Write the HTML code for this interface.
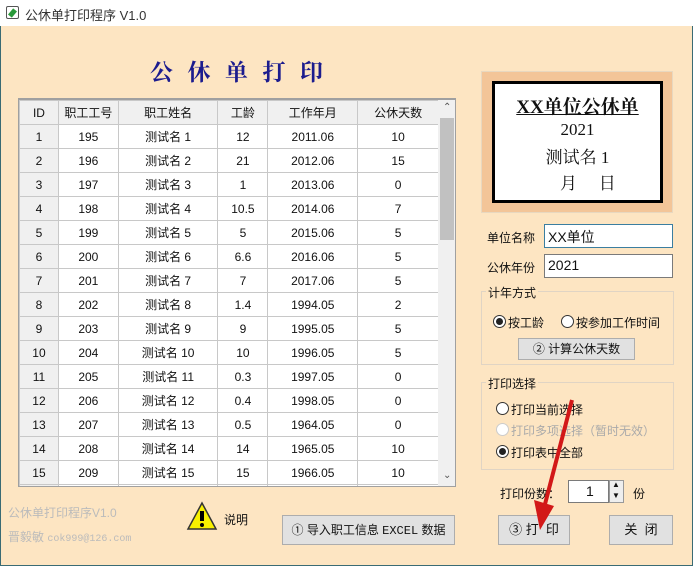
<!DOCTYPE html>
<html><head><meta charset="utf-8"><style>
*{margin:0;padding:0;box-sizing:border-box}
body{width:693px;height:566px;overflow:hidden;background:#fde5c2;font-family:"Liberation Sans","Microsoft YaHei","Noto Sans CJK SC",sans-serif;font-size:12px;color:#111;position:relative}
.a{position:absolute}
.t{position:absolute;white-space:nowrap}
.btn{position:absolute;background:#e1e1e1;border:1px solid #adadad;text-align:center;font-size:13px}
.rad{position:absolute;width:13px;height:13px;border:1px solid #333;border-radius:50%;background:#fff}
.rad.on::after{content:"";position:absolute;left:2px;top:2px;width:7px;height:7px;border-radius:50%;background:#222}
table{border-collapse:collapse;font-size:12px}
td{border:1px solid #c8c8c8;text-align:center;height:24px;padding:0}
</style></head><body>
<div class="a" style="left:0;top:0;width:693px;height:566px;border:1px solid #3a6b74;border-top:none"></div>
<div class="a" style="left:0;top:0;width:693px;height:26px;background:#fff"></div>
<div class="a" style="left:6px;top:6px;width:13px;height:13px;border:1px solid #555;border-radius:2px;background:#fff"><div class="a" style="left:3px;top:2px;width:5px;height:8px;background:#2a9a3a;transform:rotate(40deg)"></div></div>
<div class="t" style="left:25px;top:5px;font-size:13px;color:#333">公休单打印程序 V1.0</div>
<div class="t" style="left:150px;top:54px;font-size:23px;font-weight:bold;color:#1c1c8e;letter-spacing:14.5px;font-family:'Noto Serif CJK SC',serif">公休单打印</div>

<div class="a" style="left:18px;top:98px;width:438px;height:389px;border:1px solid #a0a0a0;border-top:2px solid #a0a0a0;background:#fff;overflow:hidden">
<table style="position:absolute;left:0;top:0;width:420px">
<colgroup><col style="width:39px"><col style="width:60px"><col style="width:100px"><col style="width:50px"><col style="width:90px"><col style="width:81px"></colgroup>
<tr style="background:#f0f0f0"><td>ID</td><td>职工工号</td><td>职工姓名</td><td>工龄</td><td>工作年月</td><td>公休天数</td></tr>
<tr><td style="background:#f0f0f0">1</td><td>195</td><td>测试名 1</td><td>12</td><td>2011.06</td><td>10</td></tr>
<tr><td style="background:#f0f0f0">2</td><td>196</td><td>测试名 2</td><td>21</td><td>2012.06</td><td>15</td></tr>
<tr><td style="background:#f0f0f0">3</td><td>197</td><td>测试名 3</td><td>1</td><td>2013.06</td><td>0</td></tr>
<tr><td style="background:#f0f0f0">4</td><td>198</td><td>测试名 4</td><td>10.5</td><td>2014.06</td><td>7</td></tr>
<tr><td style="background:#f0f0f0">5</td><td>199</td><td>测试名 5</td><td>5</td><td>2015.06</td><td>5</td></tr>
<tr><td style="background:#f0f0f0">6</td><td>200</td><td>测试名 6</td><td>6.6</td><td>2016.06</td><td>5</td></tr>
<tr><td style="background:#f0f0f0">7</td><td>201</td><td>测试名 7</td><td>7</td><td>2017.06</td><td>5</td></tr>
<tr><td style="background:#f0f0f0">8</td><td>202</td><td>测试名 8</td><td>1.4</td><td>1994.05</td><td>2</td></tr>
<tr><td style="background:#f0f0f0">9</td><td>203</td><td>测试名 9</td><td>9</td><td>1995.05</td><td>5</td></tr>
<tr><td style="background:#f0f0f0">10</td><td>204</td><td>测试名 10</td><td>10</td><td>1996.05</td><td>5</td></tr>
<tr><td style="background:#f0f0f0">11</td><td>205</td><td>测试名 11</td><td>0.3</td><td>1997.05</td><td>0</td></tr>
<tr><td style="background:#f0f0f0">12</td><td>206</td><td>测试名 12</td><td>0.4</td><td>1998.05</td><td>0</td></tr>
<tr><td style="background:#f0f0f0">13</td><td>207</td><td>测试名 13</td><td>0.5</td><td>1964.05</td><td>0</td></tr>
<tr><td style="background:#f0f0f0">14</td><td>208</td><td>测试名 14</td><td>14</td><td>1965.05</td><td>10</td></tr>
<tr><td style="background:#f0f0f0">15</td><td>209</td><td>测试名 15</td><td>15</td><td>1966.05</td><td>10</td></tr>
<tr><td style="background:#f0f0f0">16</td><td>210</td><td></td><td></td><td></td><td></td></tr>
</table>
<div class="a" style="left:419px;top:0;width:18px;height:387px;background:#f0f0f0"></div>
<div class="a" style="left:421px;top:18px;width:14px;height:122px;background:#c1c1c1"></div>
<div class="t" style="left:424px;top:2px;font-size:10px;color:#555">&#8963;</div>
<div class="t" style="left:424px;top:370px;font-size:10px;color:#555">&#8964;</div>
</div>

<div class="a" style="left:481px;top:71px;width:192px;height:142px;background:#f3c598;border:1px solid #e8d8c0"></div>
<div class="a" style="left:492px;top:81px;width:171px;height:122px;background:#fff;border:3px solid #000"></div>
<div class="t" style="left:492px;top:92px;width:171px;text-align:center;font-size:19px;font-weight:bold;text-decoration:underline;font-family:'Liberation Serif','Noto Serif CJK SC',serif">XX单位公休单</div>
<div class="t" style="left:492px;top:120px;width:171px;text-align:center;font-size:17px;font-family:'Liberation Serif','Noto Serif CJK SC',serif">2021</div>
<div class="t" style="left:492px;top:143px;width:171px;text-align:center;font-size:17px;font-family:'Liberation Serif','Noto Serif CJK SC',serif">测试名 1</div>
<div class="t" style="left:560px;top:169px;font-size:17px;font-family:'Noto Serif CJK SC',serif">月&nbsp;&nbsp;&nbsp;&nbsp;&nbsp;日</div>

<div class="t" style="left:487px;top:229px;font-size:12px">单位名称</div>
<div class="a" style="left:544px;top:224px;width:129px;height:24px;background:#fff;border:1px solid #3b7ea0"></div>
<div class="t" style="left:548px;top:227px;font-size:14px">XX单位</div>
<div class="t" style="left:487px;top:259px;font-size:12px">公休年份</div>
<div class="a" style="left:544px;top:254px;width:129px;height:24px;background:#fff;border:1px solid #7a7a7a"></div>
<div class="t" style="left:548px;top:257px;font-size:14px">2021</div>

<div class="a" style="left:481px;top:291px;width:193px;height:74px;border:1px solid #e0d4c4"></div>
<div class="t" style="left:486px;top:284px;font-size:12px;background:#fde5c2;padding:0 2px">计年方式</div>
<div class="rad on" style="left:493px;top:315px"></div>
<div class="t" style="left:508px;top:314px;font-size:12px">按工龄</div>
<div class="rad" style="left:561px;top:315px"></div>
<div class="t" style="left:576px;top:314px;font-size:12px">按参加工作时间</div>
<div class="btn" style="left:518px;top:338px;width:117px;height:22px;line-height:20px;font-size:12px">② 计算公休天数</div>

<div class="a" style="left:481px;top:382px;width:193px;height:88px;border:1px solid #e0d4c4"></div>
<div class="t" style="left:486px;top:375px;font-size:12px;background:#fde5c2;padding:0 2px">打印选择</div>
<div class="rad" style="left:496px;top:402px"></div>
<div class="t" style="left:511px;top:401px;font-size:12px">打印当前选择</div>
<div class="rad" style="left:496px;top:423px;border-color:#ccc"></div>
<div class="t" style="left:511px;top:422px;font-size:12px;color:#aaa">打印多项选择（暂时无效）</div>
<div class="rad on" style="left:496px;top:445px"></div>
<div class="t" style="left:511px;top:444px;font-size:12px">打印表中全部</div>

<div class="t" style="left:500px;top:485px;font-size:12px">打印份数：</div>
<div class="a" style="left:568px;top:480px;width:41px;height:23px;background:#fff;border:1px solid #7a7a7a"></div>
<div class="t" style="left:586px;top:483px;font-size:14px">1</div>
<div class="a" style="left:609px;top:480px;width:15px;height:23px;background:#eee;border:1px solid #999"></div>
<div class="t" style="left:612px;top:480px;font-size:8px">▲</div>
<div class="t" style="left:612px;top:491px;font-size:8px">▼</div>
<div class="t" style="left:633px;top:485px;font-size:12px">份</div>

<div class="btn" style="left:498px;top:515px;width:72px;height:30px;line-height:28px">③ 打 &nbsp;印</div>
<div class="btn" style="left:609px;top:515px;width:64px;height:30px;line-height:28px">关 &nbsp;闭</div>
<div class="btn" style="left:282px;top:515px;width:173px;height:30px;line-height:28px;font-size:12px">① 导入职工信息 <span style="font-family:'Liberation Mono',monospace">EXCEL</span> 数据</div>

<svg class="a" style="left:186px;top:501px" width="32" height="32"><polygon points="16,2 30,28 2,28" fill="#f8f000" stroke="#333" stroke-width="1.5"/><rect x="14" y="10" width="4" height="10" fill="#000"/><circle cx="16" cy="24" r="2" fill="#000"/></svg>
<div class="t" style="left:224px;top:511px;font-size:12px">说明</div>
<div class="t" style="left:8px;top:504px;font-size:12px;color:#bbb">公休单打印程序V1.0</div>
<div class="t" style="left:8px;top:528px;font-size:12px;color:#bbb">晋毅敏 <span style="font-family:'Liberation Mono',monospace;font-size:10px">cok999@126.com</span></div>

<svg class="a" style="left:520px;top:390px" width="80" height="150"><line x1="52" y1="10" x2="24" y2="118" stroke="#d21818" stroke-width="4"/><polygon points="14,110 34,116 20,140" fill="#d21818"/></svg>
</body></html>
